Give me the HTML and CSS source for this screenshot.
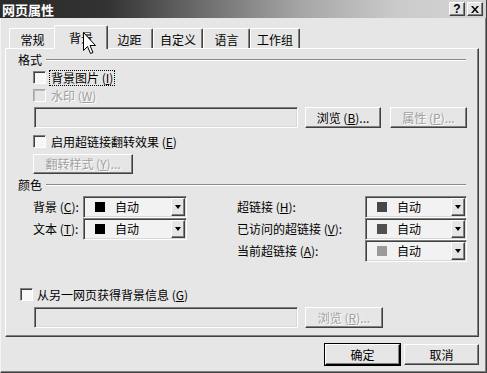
FILE: index.html
```html
<!DOCTYPE html>
<html lang="zh-CN">
<head>
<meta charset="utf-8">
<title>网页属性</title>
<link rel="stylesheet" href="styles.css">
</head>
<body>
<div class="window">
  <div class="titlebar">
    <span class="title">网页属性</span>
    <div class="tb-buttons">
      <span class="tb-btn help">?</span>
      <span class="tb-btn close"><svg width="8" height="7" viewBox="0 0 8 7"><path d="M0 0h2l2 2.5L6 0h2L5 3.5 8 7H6L4 4.5 2 7H0l3-3.5z" fill="#000"/></svg></span>
    </div>
  </div>

  <div class="tabs">
    <div class="tab">常规</div>
    <div class="tab active">背景</div>
    <div class="tab">边距</div>
    <div class="tab">自定义</div>
    <div class="tab">语言</div>
    <div class="tab">工作组</div>
  </div>

  <div class="panel">
    <div class="group-head"><span class="group-label">格式</span><i class="rule"></i></div>

    <div class="row check">
      <span class="cb"></span><span class="lbl focus">背景图片 (<u>I</u>)</span>
    </div>
    <div class="row check disabled">
      <span class="cb"></span><span class="lbl">水印 (<u>W</u>)</span>
    </div>
    <div class="row fieldrow">
      <span class="field"></span>
      <span class="btn w76">浏览 (<u>B</u>)...</span>
      <span class="btn w77 off">属性 (<u>P</u>)...</span>
    </div>
    <div class="row check spaced">
      <span class="cb"></span><span class="lbl">启用超链接翻转效果 (<u>E</u>)</span>
    </div>
    <div class="row btnrow">
      <span class="btn w100 off">翻转样式 (<u>Y</u>)...</span>
    </div>

    <div class="group-head second"><span class="group-label">颜色</span><i class="rule"></i></div>

    <div class="colors">
      <div class="color-col left">
        <div class="color-row">
          <span class="clabel">背景 (<u>C</u>):</span>
          <div class="combo"><span class="swatch black"></span><span class="ctext">自动</span><span class="cbtn"><i class="arrow"></i></span></div>
        </div>
        <div class="color-row">
          <span class="clabel">文本 (<u>T</u>):</span>
          <div class="combo"><span class="swatch black"></span><span class="ctext">自动</span><span class="cbtn"><i class="arrow"></i></span></div>
        </div>
      </div>
      <div class="color-col right">
        <div class="color-row">
          <span class="clabel">超链接 (<u>H</u>):</span>
          <div class="combo"><span class="swatch dark"></span><span class="ctext">自动</span><span class="cbtn"><i class="arrow"></i></span></div>
        </div>
        <div class="color-row">
          <span class="clabel">已访问的超链接 (<u>V</u>):</span>
          <div class="combo"><span class="swatch dark2"></span><span class="ctext">自动</span><span class="cbtn"><i class="arrow"></i></span></div>
        </div>
        <div class="color-row">
          <span class="clabel">当前超链接 (<u>A</u>):</span>
          <div class="combo"><span class="swatch light"></span><span class="ctext">自动</span><span class="cbtn"><i class="arrow"></i></span></div>
        </div>
      </div>
    </div>

    <div class="row check outer">
      <span class="cb"></span><span class="lbl">从另一网页获得背景信息 (<u>G</u>)</span>
    </div>
    <div class="row fieldrow last">
      <span class="field"></span>
      <span class="btn w78 off">浏览 (<u>R</u>)...</span>
    </div>
  </div>

  <div class="footer">
    <span class="btn w75 default">确定</span>
    <span class="btn w75">取消</span>
  </div>
</div>

<svg class="cursor" width="14" height="23" viewBox="0 0 14 23">
  <path d="M0.5 0.5V18.5L4.5 14.5L7.5 21.5L10 20.5L7 13.5H12.5Z" fill="#fff" stroke="#000" stroke-width="1"/>
</svg>
</body>
</html>
```

FILE: styles.css
```css
* { box-sizing: border-box; }

html, body {
  margin: 0;
  padding: 0;
}

body {
  width: 487px;
  height: 373px;
  overflow: hidden;
  position: relative;
  background: #e6e6e6;
  font-family: "Noto Sans CJK SC", "Noto Sans", "Liberation Sans", sans-serif;
  font-size: 12px;
  line-height: 1;
  color: #000;
}

u { text-decoration: underline; text-underline-offset: 1px; }

.window {
  width: 487px;
  height: 373px;
  background: #e6e6e6;
  border-left: 1px solid #f4f4f4;
  border-right: 1px solid #404040;
  border-bottom: 1px solid #404040;
  box-shadow: inset -1px -1px 0 #808080;
  display: flex;
  flex-direction: column;
}

/* title bar */
.titlebar {
  height: 18px;
  flex: none;
  display: flex;
  align-items: center;
  justify-content: space-between;
  padding: 0 3px 0 2px;
  margin-left: -1px;
  background: linear-gradient(to right, #2a2a2a 0%, #333 22%, #6e6e6e 42%, #a6a6a6 62%, #cbcbcb 82%, #d4d4d4 100%);
}

.title {
  color: #fff;
  font-weight: bold;
  font-size: 13px;
}

.tb-buttons {
  display: flex;
  gap: 2px;
}

.tb-btn {
  width: 16px;
  height: 14px;
  display: flex;
  align-items: center;
  justify-content: center;
  background: #e6e6e6;
  border-top: 1px solid #fff;
  border-left: 1px solid #fff;
  border-right: 1px solid #404040;
  border-bottom: 1px solid #404040;
  box-shadow: inset -1px -1px 0 #808080;
  font-family: "Liberation Sans", sans-serif;
  font-weight: bold;
  font-size: 12px;
}

/* tabs */
.tabs {
  flex: none;
  height: 23px;
  margin-top: 7px;
  padding-left: 8px;
  display: flex;
  align-items: flex-end;
  position: relative;
  z-index: 1;
}

.tab {
  height: 20px;
  min-width: 47px;
  padding: 2px 6px 0;
  display: flex;
  align-items: center;
  justify-content: center;
  border-top: 1px solid #fff;
  border-left: 1px solid #fff;
  border-right: 1px solid #404040;
  box-shadow: inset -1px 0 0 #808080;
  border-radius: 2px 2px 0 0;
  background: #e6e6e6;
}

.tab.active {
  height: 24px;
  min-width: 54px;
  margin: 0 -2px -1px;
  padding-top: 0;
  position: relative;
  z-index: 2;
}

/* panel */
.panel {
  flex: none;
  width: 474px;
  height: 289px;
  margin-left: 4px;
  padding-top: 4px;
  border-top: 1px solid #fff;
  border-left: 1px solid #fff;
  border-right: 1px solid #404040;
  border-bottom: 1px solid #404040;
  box-shadow: inset -1px -1px 0 #808080;
  display: flex;
  flex-direction: column;
}

.group-head {
  height: 14px;
  display: flex;
  align-items: center;
  padding-left: 12px;
  margin-right: 12px;
}

.group-head.second { margin-top: 4px; }

.group-label { margin-right: 4px; }

.rule {
  flex: 1;
  height: 2px;
  border-top: 1px solid #8a8a8a;
  border-bottom: 1px solid #fff;
}

.row {
  display: flex;
  align-items: center;
}

.check {
  height: 17px;
  padding-left: 27px;
  margin-top: 2px;
}

.check + .check { margin-top: 1px; }
.check.spaced { margin-top: 5px; }
.check.outer { margin-top: 24px; padding-left: 14px; }

.cb {
  width: 13px;
  height: 13px;
  flex: none;
  background: #f6f6f6;
  border-top: 1px solid #808080;
  border-left: 1px solid #808080;
  border-right: 1px solid #fff;
  border-bottom: 1px solid #fff;
  box-shadow: inset 1px 1px 0 #404040;
  margin-right: 4px;
}

.check.outer .cb { margin-right: 3px; }

.lbl { padding: 1px 1px; }

.focus { outline: 1px dotted #000; outline-offset: 0; }

.disabled .cb {
  background: #e6e6e6;
  border-top-color: #a8a8a8;
  border-left-color: #a8a8a8;
  box-shadow: inset 1px 1px 0 #b8b8b8;
}

.disabled .lbl,
.off {
  color: #a0a0a0;
  text-shadow: 1px 1px 0 #fff;
}

.fieldrow {
  height: 21px;
  margin-top: 3px;
  padding-left: 28px;
}

.fieldrow.last { margin-top: 4px; }

.field {
  width: 264px;
  height: 21px;
  margin-right: 7px;
  background: #e6e6e6;
  border-top: 1px solid #808080;
  border-left: 1px solid #808080;
  border-right: 1px solid #fff;
  border-bottom: 1px solid #fff;
  box-shadow: inset 1px 1px 0 #404040, inset -1px -1px 0 #d8d8d8;
}

.btn {
  height: 21px;
  display: flex;
  align-items: center;
  justify-content: center;
  background: #e6e6e6;
  border-top: 1px solid #fff;
  border-left: 1px solid #fff;
  border-right: 1px solid #404040;
  border-bottom: 1px solid #404040;
  box-shadow: inset -1px -1px 0 #808080;
}

.w75 { width: 75px; }
.w76 { width: 76px; margin-right: 9px; }
.w77 { width: 77px; }
.w78 { width: 78px; }
.w100 { width: 100px; height: 20px; }

.btnrow {
  height: 20px;
  margin-top: 4px;
  padding-left: 27px;
}

/* colours */
.colors {
  margin-top: 4px;
  padding-left: 27px;
  display: flex;
}

.color-col { display: flex; flex-direction: column; }
.color-col.left .clabel { width: 50px; }
.color-col.left .combo { width: 104px; }
.color-col.right { margin-left: 50px; }
.color-col.right .clabel { width: 128px; }
.color-col.right .combo { width: 102px; }

.color-row {
  height: 22px;
  display: flex;
  align-items: center;
}

.combo {
  height: 22px;
  display: flex;
  align-items: center;
  padding-left: 10px;
  background: #f2f2f2;
  border-top: 1px solid #808080;
  border-left: 1px solid #808080;
  border-right: 1px solid #fff;
  border-bottom: 1px solid #fff;
  box-shadow: inset 1px 1px 0 #404040, inset -1px -1px 0 #d8d8d8;
}

.swatch {
  width: 10px;
  height: 10px;
  flex: none;
  margin-left: 1px;
}

.swatch.black { background: #000; }
.swatch.dark { background: #474747; }
.swatch.dark2 { background: #505050; }
.swatch.light { background: #9a9a9a; }

.ctext { margin-left: 10px; }

.cbtn {
  margin-left: auto;
  margin-right: 1px;
  width: 14px;
  height: 18px;
  display: flex;
  align-items: center;
  justify-content: center;
  background: #e6e6e6;
  border-top: 1px solid #fff;
  border-left: 1px solid #fff;
  border-right: 1px solid #404040;
  border-bottom: 1px solid #404040;
  box-shadow: inset -1px -1px 0 #808080;
}

.arrow {
  width: 0;
  height: 0;
  border-left: 3.5px solid transparent;
  border-right: 3.5px solid transparent;
  border-top: 4px solid #000;
}

/* footer */
.footer {
  flex: none;
  margin-top: 7px;
  padding-right: 7px;
  display: flex;
  justify-content: flex-end;
  gap: 4px;
}

.btn.default {
  outline: 1px solid #000;
  outline-offset: 0;
  border-right-color: #000;
  border-bottom-color: #000;
}

/* mouse pointer overlay */
.cursor {
  position: absolute;
  left: 83px;
  top: 32px;
  z-index: 10;
}
```
